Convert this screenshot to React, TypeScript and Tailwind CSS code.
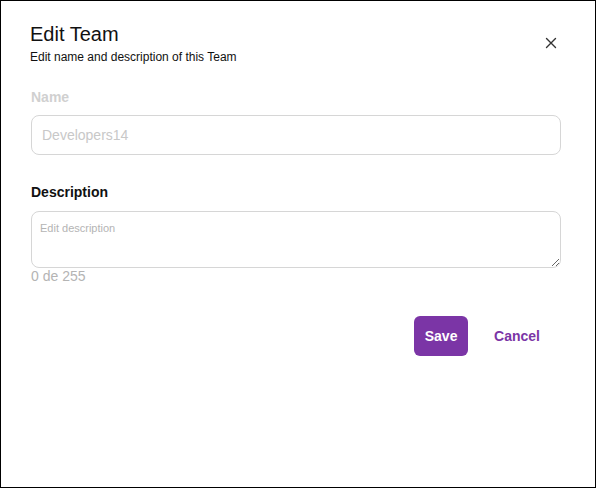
import React from "react";

export default function App() {
  return (
    <div className="w-[596px] h-[488px] border border-black bg-white font-['Liberation_Sans',Arial,sans-serif]">
      <div className="flex items-start justify-between pl-[29px] pr-[34px] pt-[21px]">
        <div>
          <h2 className="text-[20px] leading-[24px] text-[#111]">Edit Team</h2>
          <p className="mt-[4px] text-[12px] leading-[14px] text-[#111]">Edit name and description of this Team</p>
        </div>
        <button className="mt-[11px] p-1 text-[#333]" aria-label="Close">
          <svg width="12" height="12" viewBox="0 0 12 12" fill="none" stroke="currentColor" strokeWidth="1.4" strokeLinecap="round">
            <path d="M1.5 1.5 L10.5 10.5 M10.5 1.5 L1.5 10.5" />
          </svg>
        </button>
      </div>

      <div className="pl-[30px] pr-[34px] pt-[25px]">
        <label className="block text-[14px] leading-[16px] font-bold text-[#d0d0d0]">Name</label>
        <div className="mt-[10px] h-[40px] rounded-[8px] border border-[#d6d6d6] px-[10px] flex items-center text-[14px] text-[#c8c8c8]">
          Developers14
        </div>

        <label className="mt-[29px] block text-[14px] leading-[16px] font-bold text-[#111]">Description</label>
        <textarea
          placeholder="Edit description"
          className="mt-[11px] block w-full h-[57px] rounded-[8px] border border-[#d6d6d6] px-[8px] py-[10px] text-[11px] leading-[13px] placeholder:text-[#b4b4b4] outline-none"
        />
        <p className="text-[14px] leading-[16px] text-[#b4b4b4]">0 de 255</p>

        <div className="mt-[32px] flex justify-end items-center gap-[26px] pr-[21px]">
          <button className="h-[40px] w-[54px] rounded-[6px] bg-[#7b35a6] text-white text-[14px] font-bold">Save</button>
          <button className="text-[14px] font-bold text-[#7b35a6]">Cancel</button>
        </div>
      </div>
    </div>
  );
}
